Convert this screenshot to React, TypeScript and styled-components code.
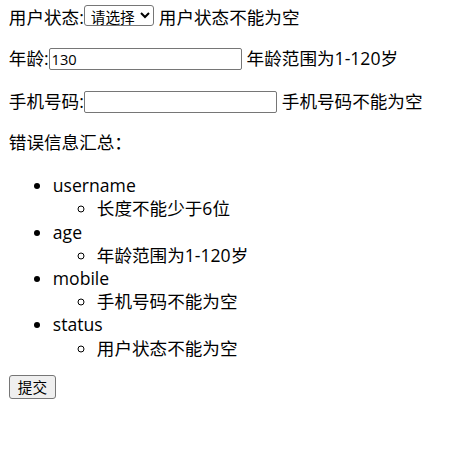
import React from 'react'
import styled, { createGlobalStyle } from 'styled-components'

const GlobalStyle = createGlobalStyle`
  body {
    margin: 5px 8.8px 8.8px;
    font-family: 'Open Sans', 'Noto Sans CJK SC', sans-serif;
    font-size: 17.6px;
    line-height: 23.2px;
    color: #000;
    background: #fff;
  }
`

const Field = styled.p<{ $after: number }>`
  margin: 0 0 ${(p) => p.$after}px;
`

const Summary = styled.p`
  margin: 0 0 19.6px;
`

const Select = styled.select`
  box-sizing: border-box;
  width: 70px;
  height: 21px;
  font-family: 'Open Sans', 'Noto Sans CJK SC', sans-serif;
  font-size: 14.67px;
  border: 1px solid #767676;
  border-radius: 3px;
  background: #fff;
  padding: 0 2px;
  margin: 0 5px 0 0;
  vertical-align: 1px;
`

const TextInput = styled.input`
  box-sizing: border-box;
  width: 193px;
  height: 22px;
  font-family: 'Open Sans', 'Noto Sans CJK SC', sans-serif;
  font-size: 14.67px;
  border: 1px solid #767676;
  border-radius: 2px;
  padding: 1px 2px;
  margin: 0 5px 0 0;
`

const ErrorList = styled.ul`
  margin: 0 0 15.6px;
  padding-left: 44px;
  list-style: disc;
`

const SubList = styled.ul`
  margin: 0;
  padding-left: 44px;
  list-style: circle;
`

const SubmitButton = styled.button`
  box-sizing: border-box;
  display: block;
  height: 24px;
  padding: 1px 8px;
  font-family: 'Open Sans', 'Noto Sans CJK SC', sans-serif;
  font-size: 14.67px;
  line-height: 18px;
  border: 1px solid #767676;
  border-radius: 3px;
  background: #efefef;
`

const errors: [string, string][] = [
  ['username', '长度不能少于6位'],
  ['age', '年龄范围为1-120岁'],
  ['mobile', '手机号码不能为空'],
  ['status', '用户状态不能为空'],
]

export default function App() {
  return (
    <>
      <GlobalStyle />
      <form onSubmit={(e) => e.preventDefault()}>
        <Field $after={17.6}>
          用户状态:
          <Select defaultValue="">
            <option value="">请选择</option>
            <option value="1">正常</option>
            <option value="0">禁用</option>
          </Select>
          用户状态不能为空
        </Field>
        <Field $after={19.6}>
          年龄:
          <TextInput type="text" defaultValue="130" />
          年龄范围为1-120岁
        </Field>
        <Field $after={18.6}>
          手机号码:
          <TextInput type="text" defaultValue="" />
          手机号码不能为空
        </Field>
        <Summary>错误信息汇总：</Summary>
        <ErrorList>
          {errors.map(([key, msg]) => (
            <li key={key}>
              {key}
              <SubList>
                <li>{msg}</li>
              </SubList>
            </li>
          ))}
        </ErrorList>
        <SubmitButton type="submit">提交</SubmitButton>
      </form>
    </>
  )
}
